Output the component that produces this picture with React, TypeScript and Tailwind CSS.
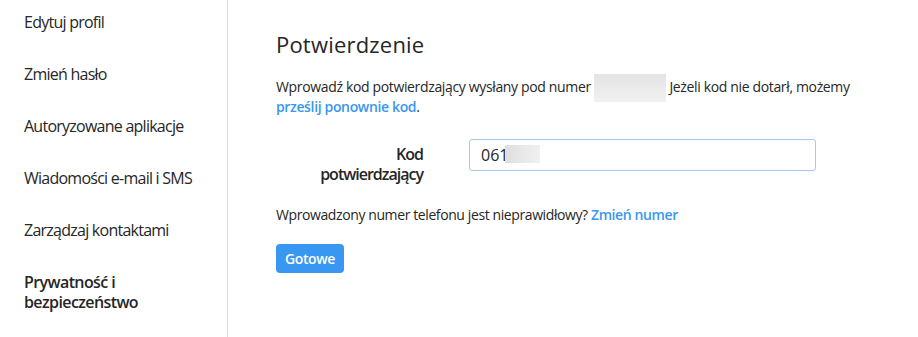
import React from "react";

const items = [
  "Edytuj profil",
  "Zmień hasło",
  "Autoryzowane aplikacje",
  "Wiadomości e-mail i SMS",
  "Zarządzaj kontaktami",
];

const font = '"Open Sans", "Noto Sans", sans-serif';

export default function App() {
  return (
    <div
      className="flex w-[918px] h-[337px] overflow-hidden bg-white text-[#262626]"
      style={{ fontFamily: font }}
    >
      <aside className="w-[228px] shrink-0 border-r border-[#dbdbdb] -mt-[4px]">
        <ul>
          {items.map((t) => (
            <li key={t} className="pl-[24px] py-[16px] text-[16px] leading-[20px] tracking-[-0.75px]">
              {t}
            </li>
          ))}
          <li className="pl-[24px] pr-4 py-[16px] text-[16px] leading-[20px] font-semibold tracking-[-0.6px]">
            Prywatność i
            <br />
            bezpieczeństwo
          </li>
        </ul>
      </aside>
      <main className="flex-1 pl-[48px] pr-[50px] pt-[30px]">
        <h2 className="text-[22px] leading-[28px] font-normal tracking-[0.2px]">Potwierdzenie</h2>
        <p className="mt-[19px] text-[14px] leading-[19px] w-[600px] tracking-[-0.35px]">
          Wprowadź kod potwierdzający wysłany pod numer{" "}
          <span className="inline-block align-middle w-[72px] h-[28px] -my-[5px] bg-gradient-to-b from-[#e4e4e4] to-[#f1f1f1]" />{" "}
          Jeżeli kod nie dotarł, możemy{" "}
          <span className="font-semibold text-[#3897f0]">prześlij ponownie kod</span>.
        </p>
        <div className="mt-[23px] flex items-start">
          <label className="w-[147px] text-right text-[16px] leading-[20px] font-semibold pt-[5px] tracking-[-1px]">
            Kod
            <br />
            potwierdzający
          </label>
          <div className="relative ml-[46px]">
            <input
              readOnly
              value="061"
              className="w-[347px] h-[32px] border border-[#a9c8f0] rounded-[3px] px-[11px] text-[16px] text-[#262626] outline-none"
              style={{ fontFamily: font }}
            />
            <span className="absolute left-[36px] top-[6px] w-[35px] h-[18px] bg-gradient-to-r from-[#dedede] via-[#e8e8e8] to-[#f0f0f0]" />
          </div>
        </div>
        <p className="mt-[22px] text-[14px] leading-[18px] tracking-[-0.4px]">
          Wprowadzony numer telefonu jest nieprawidłowy?{" "}
          <span className="font-semibold text-[#3897f0]">Zmień numer</span>
        </p>
        <button className="mt-[20px] h-[29px] w-[68px] rounded-[4px] bg-[#3897f0] text-white text-[14px] font-semibold tracking-[-0.4px]">
          Gotowe
        </button>
      </main>
    </div>
  );
}
